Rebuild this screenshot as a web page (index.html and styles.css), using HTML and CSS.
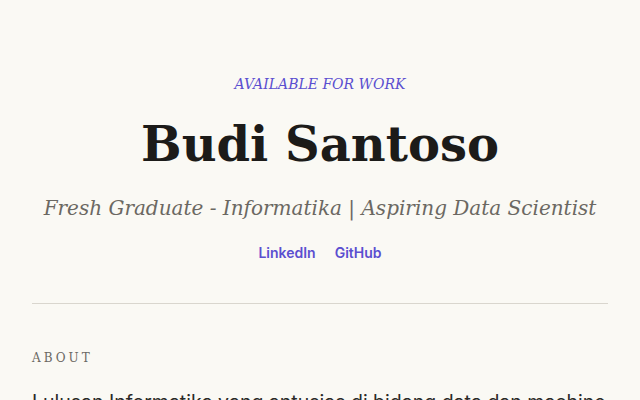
FILE: index.html
```html
<!doctype html>
<html lang="id">
<head>
<meta charset="utf-8">
<title>Budi Santoso</title>
<link rel="stylesheet" href="styles.css">
</head>
<body>
<div class="page">
	<header class="hero">
		<p class="status">AVAILABLE FOR WORK</p>
		<h1 class="name">Budi Santoso</h1>
		<p class="tagline">Fresh Graduate - Informatika | Aspiring Data Scientist</p>
		<nav class="links">
			<a href="#">LinkedIn</a>
			<a href="#">GitHub</a>
		</nav>
	</header>
	<hr class="rule">
	<section class="about">
		<h2 class="label">ABOUT</h2>
		<p class="text">Lulusan Informatika yang antusias di bidang data dan machine learning, senang mengolah data menjadi insight yang berguna.</p>
	</section>
</div>
</body>
</html>
```

FILE: styles.css
```css
*{margin:0;padding:0;box-sizing:border-box;}
html,body{background:#faf9f4;}
body{font-family:'Inter','Liberation Sans',sans-serif;color:#1c1b19;}
.page{max-width:640px;margin:0 auto;padding:0 32px;}
.hero{padding-top:73px;text-align:center;}
.status{font-family:'DejaVu Serif','Liberation Serif',serif;font-style:italic;font-size:14px;line-height:22px;color:#5b4fd0;}
.name{margin-top:17px;font-family:'DejaVu Serif','Liberation Serif',serif;font-size:48px;font-weight:700;line-height:64px;color:#1c1b19;}
.tagline{margin-top:17px;font-family:'DejaVu Serif','Liberation Serif',serif;font-style:italic;font-size:20px;line-height:30px;color:#6b6862;}
.links{display:flex;justify-content:center;gap:19px;margin-top:20px;}
.links a{font-size:14px;font-weight:600;line-height:20px;color:#5b4fd0;text-decoration:none;}
.rule{margin-top:40px;border:0;border-top:1px solid #d9d6ce;}
.about{padding-top:45px;}
.label{font-family:'DejaVu Serif','Liberation Serif',serif;font-size:12px;font-weight:400;letter-spacing:3px;line-height:18px;color:#6b6862;}
.text{margin-top:19px;font-size:19.5px;line-height:32px;color:#2b2a27;}
```
